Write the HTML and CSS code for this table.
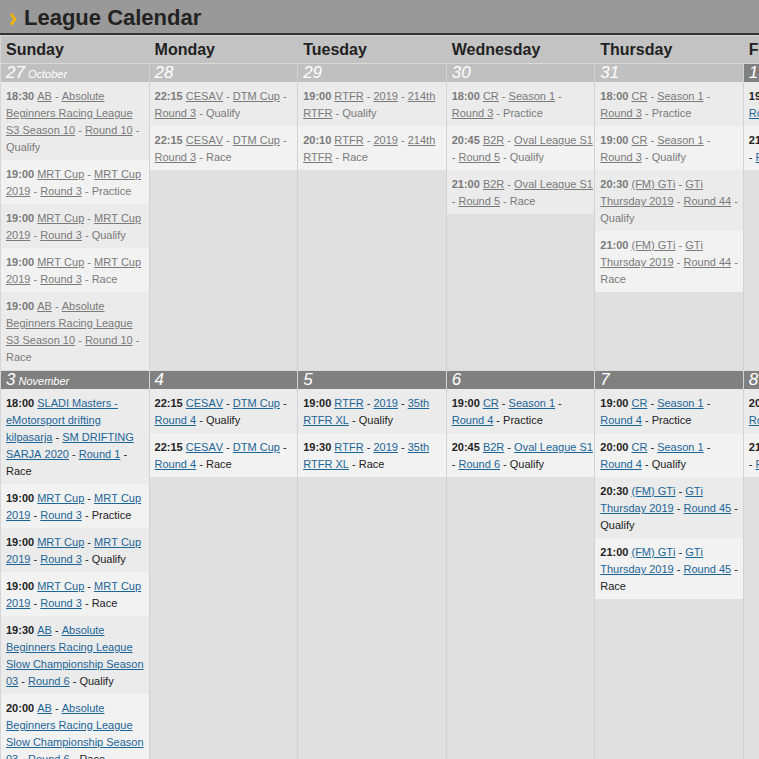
FILE: index.html
```html
<!DOCTYPE html>
<html lang="en">
<head>
<meta charset="utf-8">
<title>League Calendar</title>
<link rel="stylesheet" href="styles.css">
</head>
<body>
<div class="page-header">
  <svg class="chevron" width="14" height="33" viewBox="0 0 14 33" aria-hidden="true"><polyline points="0.9,13.8 5,19.2 0.9,24.6" fill="none" stroke="#f2b300" stroke-width="2.7"/></svg>
  <h1 class="title">League Calendar</h1>
</div>

<div class="calendar">
  <div class="daynames">
    <div class="dayname">Sunday</div>
    <div class="dayname">Monday</div>
    <div class="dayname">Tuesday</div>
    <div class="dayname">Wednesday</div>
    <div class="dayname">Thursday</div>
    <div class="dayname">Friday</div>
    <div class="dayname">Saturday</div>
  </div>

  <div class="week">
    <div class="day">
      <div class="date">27<span class="month"> October</span></div>
      <div class="events">
        <div class="ev"><b>18:30</b> <a href="#">AB</a> - <a href="#">Absolute Beginners Racing League S3 Season 10</a> - <a href="#">Round 10</a> - Qualify</div>
        <div class="ev"><b>19:00</b> <a href="#">MRT Cup</a> - <a href="#">MRT Cup 2019</a> - <a href="#">Round 3</a> - Practice</div>
        <div class="ev"><b>19:00</b> <a href="#">MRT Cup</a> - <a href="#">MRT Cup 2019</a> - <a href="#">Round 3</a> - Qualify</div>
        <div class="ev"><b>19:00</b> <a href="#">MRT Cup</a> - <a href="#">MRT Cup 2019</a> - <a href="#">Round 3</a> - Race</div>
        <div class="ev"><b>19:00</b> <a href="#">AB</a> - <a href="#">Absolute Beginners Racing League S3 Season 10</a> - <a href="#">Round 10</a> - Race</div>
      </div>
    </div>
    <div class="day">
      <div class="date">28</div>
      <div class="events">
        <div class="ev"><b>22:15</b> <a href="#">CESAV</a> - <a href="#">DTM Cup</a> - <a href="#">Round 3</a> - Qualify</div>
        <div class="ev"><b>22:15</b> <a href="#">CESAV</a> - <a href="#">DTM Cup</a> - <a href="#">Round 3</a> - Race</div>
      </div>
    </div>
    <div class="day">
      <div class="date">29</div>
      <div class="events">
        <div class="ev"><b>19:00</b> <a href="#">RTFR</a> - <a href="#">2019</a> - <a href="#">214th RTFR</a> - Qualify</div>
        <div class="ev"><b>20:10</b> <a href="#">RTFR</a> - <a href="#">2019</a> - <a href="#">214th RTFR</a> - Race</div>
      </div>
    </div>
    <div class="day">
      <div class="date">30</div>
      <div class="events">
        <div class="ev"><b>18:00</b> <a href="#">CR</a> - <a href="#">Season 1</a> - <a href="#">Round 3</a> - Practice</div>
        <div class="ev"><b>20:45</b> <a href="#">B2R</a> - <a href="#">Oval League S1</a> - <a href="#">Round 5</a> - Qualify</div>
        <div class="ev"><b>21:00</b> <a href="#">B2R</a> - <a href="#">Oval League S1</a> - <a href="#">Round 5</a> - Race</div>
      </div>
    </div>
    <div class="day">
      <div class="date">31</div>
      <div class="events">
        <div class="ev"><b>18:00</b> <a href="#">CR</a> - <a href="#">Season 1</a> - <a href="#">Round 3</a> - Practice</div>
        <div class="ev"><b>19:00</b> <a href="#">CR</a> - <a href="#">Season 1</a> - <a href="#">Round 3</a> - Qualify</div>
        <div class="ev"><b>20:30</b> <a href="#">(FM) GTi</a> - <a href="#">GTi Thursday 2019</a> - <a href="#">Round 44</a> - Qualify</div>
        <div class="ev"><b>21:00</b> <a href="#">(FM) GTi</a> - <a href="#">GTi Thursday 2019</a> - <a href="#">Round 44</a> - Race</div>
      </div>
    </div>
    <div class="day active">
      <div class="date">1</div>
      <div class="events">
        <div class="ev"><b>19:00</b> <a href="#">CR</a> - <a href="#">Season 1</a> - <a href="#">Round 3</a> - Race</div>
        <div class="ev"><b>21:00</b> <a href="#">B2R</a> - <a href="#">Oval League S1</a> - <a href="#">Round 5</a> - Race</div>
      </div>
    </div>
    <div class="day active">
      <div class="date">2</div>
      <div class="events">
        <div class="ev"><b>18:00</b> <a href="#">CESAV</a> - <a href="#">DTM Cup</a> - <a href="#">Round 3</a> - Race</div>
      </div>
    </div>
  </div>

  <div class="week">
    <div class="day active">
      <div class="date">3<span class="month"> November</span></div>
      <div class="events">
        <div class="ev"><b>18:00</b> <a href="#">SLADI Masters - eMotorsport drifting kilpasarja</a> - <a href="#">SM DRIFTING SARJA 2020</a> - <a href="#">Round 1</a> - Race</div>
        <div class="ev"><b>19:00</b> <a href="#">MRT Cup</a> - <a href="#">MRT Cup 2019</a> - <a href="#">Round 3</a> - Practice</div>
        <div class="ev"><b>19:00</b> <a href="#">MRT Cup</a> - <a href="#">MRT Cup 2019</a> - <a href="#">Round 3</a> - Qualify</div>
        <div class="ev"><b>19:00</b> <a href="#">MRT Cup</a> - <a href="#">MRT Cup 2019</a> - <a href="#">Round 3</a> - Race</div>
        <div class="ev"><b>19:30</b> <a href="#">AB</a> - <a href="#">Absolute Beginners Racing League Slow Championship Season 03</a> - <a href="#">Round 6</a> - Qualify</div>
        <div class="ev"><b>20:00</b> <a href="#">AB</a> - <a href="#">Absolute Beginners Racing League Slow Championship Season 03</a> - <a href="#">Round 6</a> - Race</div>
      </div>
    </div>
    <div class="day active">
      <div class="date">4</div>
      <div class="events">
        <div class="ev"><b>22:15</b> <a href="#">CESAV</a> - <a href="#">DTM Cup</a> - <a href="#">Round 4</a> - Qualify</div>
        <div class="ev"><b>22:15</b> <a href="#">CESAV</a> - <a href="#">DTM Cup</a> - <a href="#">Round 4</a> - Race</div>
      </div>
    </div>
    <div class="day active">
      <div class="date">5</div>
      <div class="events">
        <div class="ev"><b>19:00</b> <a href="#">RTFR</a> - <a href="#">2019</a> - <a href="#">35th RTFR XL</a> - Qualify</div>
        <div class="ev"><b>19:30</b> <a href="#">RTFR</a> - <a href="#">2019</a> - <a href="#">35th RTFR XL</a> - Race</div>
      </div>
    </div>
    <div class="day active">
      <div class="date">6</div>
      <div class="events">
        <div class="ev"><b>19:00</b> <a href="#">CR</a> - <a href="#">Season 1</a> - <a href="#">Round 4</a> - Practice</div>
        <div class="ev"><b>20:45</b> <a href="#">B2R</a> - <a href="#">Oval League S1</a> - <a href="#">Round 6</a> - Qualify</div>
      </div>
    </div>
    <div class="day active">
      <div class="date">7</div>
      <div class="events">
        <div class="ev"><b>19:00</b> <a href="#">CR</a> - <a href="#">Season 1</a> - <a href="#">Round 4</a> - Practice</div>
        <div class="ev"><b>20:00</b> <a href="#">CR</a> - <a href="#">Season 1</a> - <a href="#">Round 4</a> - Qualify</div>
        <div class="ev"><b>20:30</b> <a href="#">(FM) GTi</a> - <a href="#">GTi Thursday 2019</a> - <a href="#">Round 45</a> - Qualify</div>
        <div class="ev"><b>21:00</b> <a href="#">(FM) GTi</a> - <a href="#">GTi Thursday 2019</a> - <a href="#">Round 45</a> - Race</div>
      </div>
    </div>
    <div class="day active">
      <div class="date">8</div>
      <div class="events">
        <div class="ev"><b>20:00</b> <a href="#">CR</a> - <a href="#">Season 1</a> - <a href="#">Round 4</a> - Race</div>
        <div class="ev"><b>21:00</b> <a href="#">B2R</a> - <a href="#">Oval League S1</a> - <a href="#">Round 6</a> - Race</div>
      </div>
    </div>
    <div class="day active">
      <div class="date">9</div>
      <div class="events">
        <div class="ev"><b>18:00</b> <a href="#">CESAV</a> - <a href="#">DTM Cup</a> - <a href="#">Round 4</a> - Race</div>
      </div>
    </div>
  </div>
</div>
</body>
</html>
```

FILE: styles.css
```css
html, body {
  margin: 0;
  padding: 0;
}

body {
  overflow: hidden;
  background: #e0e0e0;
  font-family: "Liberation Sans", Arial, sans-serif;
  color: #222;
}

.page-header {
  display: flex;
  align-items: flex-start;
  height: 33px;
  padding-left: 10px;
  background: #999999;
  border-bottom: 2px solid #333333;
}

.chevron {
  display: block;
  flex: none;
}

.title {
  margin: 0;
  padding-top: 3px;
  font-size: 22px;
  line-height: 30px;
  font-weight: bold;
  color: #222222;
  white-space: nowrap;
}

.calendar {
  width: 1040px;
  border-left: 1px solid #d6d6d6;
}

.daynames {
  display: grid;
  grid-template-columns: repeat(7, 1fr);
  background: #c3c3c3;
  border-top: 1px solid #d4d4d4;
}

.dayname {
  padding-left: 5px;
  font-size: 16px;
  line-height: 27px;
  font-weight: bold;
  color: #222222;
  white-space: nowrap;
}

.week {
  display: grid;
  grid-template-columns: repeat(7, 1fr);
  border-top: 1px solid #dadada;
}

.day {
  min-width: 0;
  background: #e0e0e0;
  border-right: 1px solid #d2d2d2;
}

.date {
  height: 18px;
  padding-left: 5px;
  background: #c0c0c0;
  color: #ffffff;
  font-size: 17px;
  line-height: 18px;
  font-style: italic;
  white-space: nowrap;
  overflow: hidden;
}

.day.active .date {
  background: #808080;
}

.month {
  font-size: 11px;
}

.ev {
  padding: 6px 0 4px 5px;
  background: #ebebeb;
  color: #7a7a7a;
  font-size: 11px;
  line-height: 17px;
  font-kerning: none;
}

.ev:nth-child(even) {
  background: #f2f2f2;
}

.ev a {
  color: #7a7a7a;
  text-decoration: underline;
}

.day.active .ev {
  color: #222222;
}

.day.active .ev a {
  color: #1b6598;
}
```
